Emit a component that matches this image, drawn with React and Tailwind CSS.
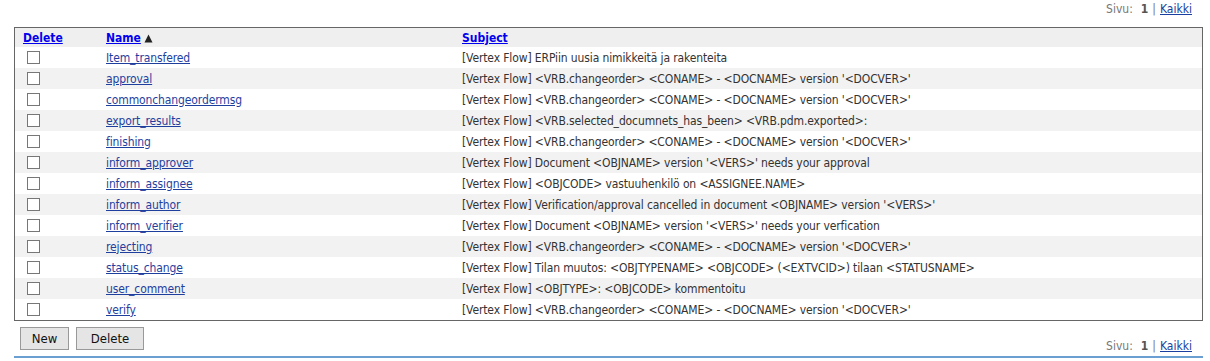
import React from 'react';

const rows = [
  ['Item_transfered', '[Vertex Flow] ERPiin uusia nimikkeitä ja rakenteita'],
  ['approval', "[Vertex Flow] <VRB.changeorder> <CONAME> - <DOCNAME> version '<DOCVER>'"],
  ['commonchangeordermsg', "[Vertex Flow] <VRB.changeorder> <CONAME> - <DOCNAME> version '<DOCVER>'"],
  ['export_results', '[Vertex Flow] <VRB.selected_documnets_has_been> <VRB.pdm.exported>:'],
  ['finishing', "[Vertex Flow] <VRB.changeorder> <CONAME> - <DOCNAME> version '<DOCVER>'"],
  ['inform_approver', "[Vertex Flow] Document <OBJNAME> version '<VERS>' needs your approval"],
  ['inform_assignee', '[Vertex Flow] <OBJCODE> vastuuhenkilö on <ASSIGNEE.NAME>'],
  ['inform_author', "[Vertex Flow] Verification/approval cancelled in document <OBJNAME> version '<VERS>'"],
  ['inform_verifier', "[Vertex Flow] Document <OBJNAME> version '<VERS>' needs your verfication"],
  ['rejecting', "[Vertex Flow] <VRB.changeorder> <CONAME> - <DOCNAME> version '<DOCVER>'"],
  ['status_change', '[Vertex Flow] Tilan muutos: <OBJTYPENAME> <OBJCODE> (<EXTVCID>) tilaan <STATUSNAME>'],
  ['user_comment', '[Vertex Flow] <OBJTYPE>: <OBJCODE> kommentoitu'],
  ['verify', "[Vertex Flow] <VRB.changeorder> <CONAME> - <DOCNAME> version '<DOCVER>'"],
];

function Pager() {
  return (
    <div className="flex justify-end pr-[4px] text-[12px] text-[#777]">
      <span>Sivu:</span>
      <span className="ml-[8px] text-[#555] font-bold">1</span>
      <span className="mx-[4px]">|</span>
      <a href="#" className="text-[#1a3fa0] underline">Kaikki</a>
    </div>
  );
}

export default function App() {
  return (
    <div
      className="w-[1210px] h-[361px] bg-white px-[14px] pt-[2px] text-[12px] text-[#333] font-stretch-condensed"
      style={{ fontFamily: '"DejaVu Sans Condensed", "DejaVu Sans", Verdana, sans-serif' }}
    >
      <div className="h-[25px] leading-[14px]">
        <Pager />
      </div>
      <div className="w-[1189px] border border-[#666]">
        <table className="w-full border-collapse">
          <thead>
            <tr className="bg-[#efefef] h-[19px]">
              <th className="w-[91px] text-left font-bold pl-[8px] pt-[1px]">
                <a href="#" className="text-[#0000ee] underline">Delete</a>
              </th>
              <th className="w-[356px] text-left font-bold">
                <a href="#" className="text-[#0000ee] underline">Name</a>
                <svg className="inline-block ml-[3px] align-[-1px]" width="9" height="9" viewBox="0 0 9 9">
                  <path d="M4.5 0.5 L8.5 8.5 L0.5 8.5 Z" fill="#222" />
                </svg>
              </th>
              <th className="text-left font-bold">
                <a href="#" className="text-[#0000ee] underline">Subject</a>
              </th>
            </tr>
          </thead>
          <tbody className="tracking-[-0.12px]">
            {rows.map(([name, subject], i) => (
              <tr key={name} className={`h-[21px] ${i % 2 === 1 ? 'bg-[#f2f2f2]' : 'bg-white'}`}>
                <td className="pl-[12px]">
                  <span className="block w-[13px] h-[13px] border border-[#777] bg-white"></span>
                </td>
                <td>
                  <a href="#" className="text-[#1f3f9f] underline">{name}</a>
                </td>
                <td className="whitespace-nowrap">{subject}</td>
              </tr>
            ))}
          </tbody>
        </table>
      </div>
      <div className="flex items-start h-[35px] pt-[6px]">
        <div className="flex gap-[7px] pl-[6px]">
          <button className="h-[23px] w-[49px] border border-[#999] bg-[#e5e5e5] text-[#111] text-[13px] leading-none">New</button>
          <button className="h-[23px] w-[68px] border border-[#999] bg-[#e5e5e5] text-[#111] text-[13px] leading-none">Delete</button>
        </div>
        <div className="ml-auto pt-[10px]">
          <Pager />
        </div>
      </div>
      <div className="w-[1189px] h-[2px] bg-[#6a9fd4]"></div>
    </div>
  );
}
